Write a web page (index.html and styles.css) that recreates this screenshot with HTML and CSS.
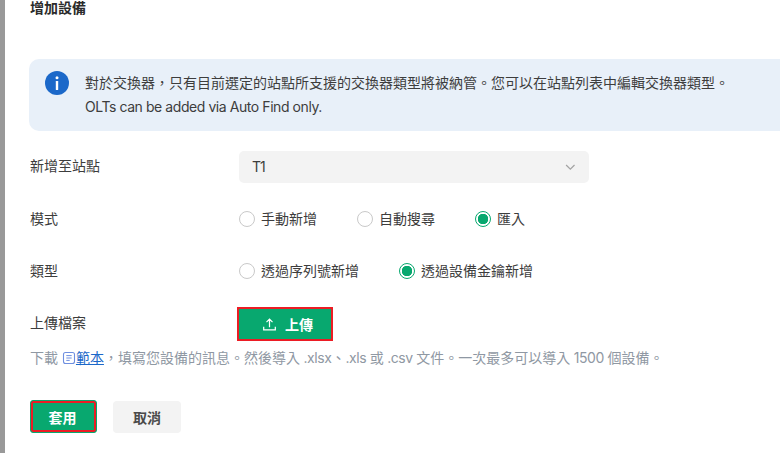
FILE: index.html
```html
<!DOCTYPE html>
<html lang="zh-Hant">
<head>
<meta charset="utf-8">
<title>增加設備</title>
<link rel="stylesheet" href="styles.css">
</head>
<body>
<div class="edge"></div>
<main class="panel">
  <h1 class="title">增加設備</h1>
  <div class="notice">
    <svg class="info" viewBox="0 0 24 24" width="24" height="24"><circle cx="12" cy="12" r="12" fill="#1b68c9"/><circle cx="12" cy="6.8" r="1.5" fill="#fff"/><rect x="10.8" y="10" width="2.4" height="9" rx=".6" fill="#fff"/></svg>
    <div class="notice-text">
      <p>對於交換器，只有目前選定的站點所支援的交換器類型將被納管。您可以在站點列表中編輯交換器類型。</p>
      <p class="latin">OLTs can be added via Auto Find only.</p>
    </div>
  </div>
  <div class="row row-site">
    <span class="label">新增至站點</span>
    <div class="select"><span class="latin value">T1</span>
      <svg viewBox="0 0 12 8" width="11" height="7"><path d="M1 1.2l4.8 4.8 4.8-4.8" fill="none" stroke="#a3a3a3" stroke-width="1.4"/></svg>
    </div>
  </div>
  <div class="row row-mode">
    <span class="label label-radio">模式</span>
    <div class="radios">
      <span class="radio r-a"><i class="dot"></i>手動新增</span>
      <span class="radio r-a"><i class="dot"></i>自動搜尋</span>
      <span class="radio on"><i class="dot"></i>匯入</span>
    </div>
  </div>
  <div class="row row-type">
    <span class="label label-radio">類型</span>
    <div class="radios">
      <span class="radio r-b"><i class="dot"></i>透過序列號新增</span>
      <span class="radio on"><i class="dot"></i>透過設備金鑰新增</span>
    </div>
  </div>
  <div class="row row-upload">
    <span class="label">上傳檔案</span>
    <button class="btn upload" type="button">
      <svg viewBox="0 0 16 16" width="15" height="15"><path d="M8 11V2.5M4.8 5.4L8 2.2l3.2 3.2M1.8 10.5v3.2h12.4v-3.2" fill="none" stroke="#fff" stroke-width="1.3"/></svg>
      上傳
    </button>
  </div>
  <p class="hint">下載 <svg class="doc" viewBox="0 0 14 14" width="14" height="14"><rect x="1.5" y="1.5" width="11" height="11" rx="2" fill="none" stroke="#6f8fe0" stroke-width="1.1"/><path d="M4.3 4.6h5.4M4.3 7h5.4M4.3 9.4h3.4" stroke="#6f8fe0" stroke-width="1"/></svg><a href="#">範本</a>，填寫您設備的訊息。然後導入<span class="latin"> .xlsx</span>、<span class="latin">.xls </span>或<span class="latin"> .csv </span>文件。一次最多可以導入<span class="latin"> 1500 </span>個設備。</p>
  <div class="actions">
    <button class="btn apply" type="button">套用</button>
    <button class="btn cancel" type="button">取消</button>
  </div>
</main>
</body>
</html>
```
FILE: styles.css
```css
* { box-sizing: border-box; }
html, body { margin: 0; height: 453px; overflow: hidden; background: #fff; }
body {
  display: flex;
  font-family: Inter, "Noto Sans CJK TC", sans-serif;
  font-size: 14px;
  color: #3d3d3d;
}
.edge { width: 5px; flex: none; background: #999; }
.panel { flex: none; width: 800px; padding-left: 25px; }
.title { margin: 0; font-size: 14px; font-weight: 700; line-height: 16px; color: #2b2b2b; }
.latin { letter-spacing: -0.43px; }
.notice {
  display: flex;
  gap: 16px;
  height: 72px;
  margin: 43px 0 20px -1px;
  padding: 12px 16px;
  background: #e8f0f9;
  border-radius: 10px;
}
.info { flex: none; }
.notice-text p { margin: 0; line-height: 24px; }
.row { display: flex; align-items: center; }
.label { flex: none; width: 209px; padding-bottom: 4px; }
.label-radio { padding-bottom: 2px; }
.select {
  display: flex;
  justify-content: space-between;
  align-items: center;
  width: 350px;
  height: 32px;
  padding: 0 13px;
  background: #f3f3f3;
  border-radius: 5px;
}
.value { padding-bottom: 2px; letter-spacing: -1px; }
.row-site { height: 32px; }
.row-mode { height: 32px; margin-top: 20px; }
.row-type { height: 32px; margin-top: 20px; }
.row-upload { height: 34px; margin-top: 20px; }
.radios { display: flex; }
.radio { display: flex; align-items: center; gap: 6px; padding-bottom: 2px; }
.r-a { width: 118px; }
.r-b { width: 160px; }
.dot {
  width: 16px;
  height: 16px;
  margin-top: 2px;
  border: 1px solid #c9c9c9;
  border-radius: 50%;
  background: #fff;
}
.on .dot {
  border-color: #08a86f;
  background: radial-gradient(circle, #08a86f 0 5px, #fff 5.5px);
}
.btn {
  display: flex;
  align-items: center;
  justify-content: center;
  font: inherit;
  font-weight: 700;
  border: 0;
  border-radius: 4px;
}
.upload {
  gap: 8px;
  width: 96px;
  height: 34px;
  margin-left: -2px;
  padding: 0 0 0 5px;
  color: #fff;
  background: #08a86f;
  border: 2px solid #ec1c24;
  border-radius: 0;
}
.hint { margin: 7px 0 0; line-height: 20px; color: #8f98a3; white-space: nowrap; }
.doc { vertical-align: -2px; }
.hint a { color: #1b68c9; }
.actions { display: flex; align-items: center; gap: 16px; margin-top: 32px; }
.apply {
  width: 67px;
  height: 33px;
  padding: 0 2px 0 0;
  color: #fff;
  background: #08a86f;
  border: 1px solid #08a86f;
  border-radius: 3px;
  box-shadow: inset 0 0 0 2px #ec1c24;
}
.cancel { width: 68px; height: 32px; color: #4a4a4a; background: #f3f3f3; }
```
